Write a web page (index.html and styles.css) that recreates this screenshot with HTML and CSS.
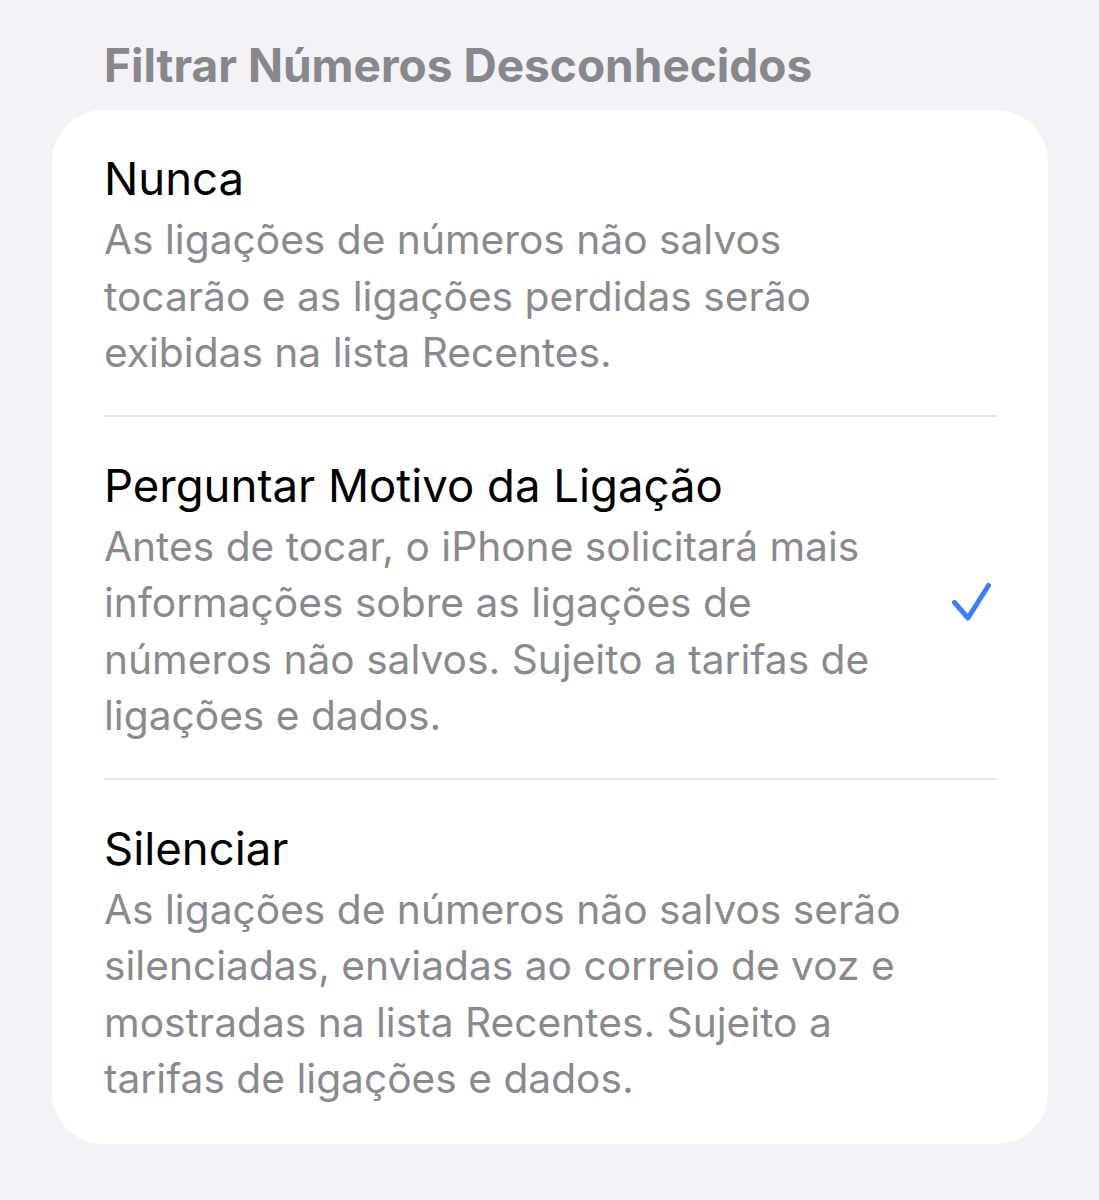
FILE: index.html
```html
<!DOCTYPE html>
<html lang="pt-BR">
<head>
<meta charset="utf-8">
<title>Filtrar Números Desconhecidos</title>
<link rel="stylesheet" href="styles.css">
</head>
<body>
<main class="page">
  <h2 class="section-header">Filtrar Números Desconhecidos</h2>
  <section class="card">
    <div class="row">
      <div class="row-text">
        <div class="row-title">Nunca</div>
        <div class="row-desc">As ligações de números não salvos<br>tocarão e as ligações perdidas serão<br>exibidas na lista Recentes.</div>
      </div>
    </div>
    <div class="row">
      <div class="row-text">
        <div class="row-title">Perguntar Motivo da Ligação</div>
        <div class="row-desc">Antes de tocar, o iPhone solicitará mais<br>informações sobre as ligações de<br>números não salvos. Sujeito a tarifas de<br>ligações e dados.</div>
      </div>
      <svg class="check" viewBox="0 0 40 40" width="40" height="40" aria-hidden="true">
        <path d="M3.5 21.5 L17 37 L37.5 4.5" fill="none" stroke="#3a80f6" stroke-width="5" stroke-linecap="round" stroke-linejoin="round"/>
      </svg>
    </div>
    <div class="row">
      <div class="row-text">
        <div class="row-title">Silenciar</div>
        <div class="row-desc">As ligações de números não salvos serão<br>silenciadas, enviadas ao correio de voz e<br>mostradas na lista Recentes. Sujeito a<br>tarifas de ligações e dados.</div>
      </div>
    </div>
  </section>
</main>
</body>
</html>
```
FILE: styles.css
```css
html, body {
  margin: 0;
  padding: 0;
  background: #f2f2f7;
}
body {
  font-family: Inter, "Liberation Sans", Arial, sans-serif;
  -webkit-font-smoothing: antialiased;
}
.page {
  padding: 37px 51px 56px 52px;
}
.section-header {
  margin: 0 0 17px 0;
  padding-left: 52px;
  font-size: 46px;
  line-height: 56px;
  font-weight: 700;
  color: #88888c;
  white-space: nowrap;
}
.card {
  background: #ffffff;
  border-radius: 52px;
  padding: 0 51px 3px 52px;
}
.row {
  display: flex;
  align-items: center;
  padding: 41px 0 33px 0;
  border-bottom: 2px solid #e5e5e7;
}
.row:last-child {
  border-bottom: none;
}
.row-text {
  flex: 1;
  min-width: 0;
}
.row-title {
  font-size: 45.5px;
  line-height: 56px;
  color: #000000;
  margin-bottom: 5px;
  white-space: nowrap;
}
.row-desc {
  font-size: 40.7px;
  line-height: 56.5px;
  color: #8a8a8e;
  white-space: nowrap;
}
.check {
  flex: none;
  display: block;
  margin-right: 6px;
}
```
